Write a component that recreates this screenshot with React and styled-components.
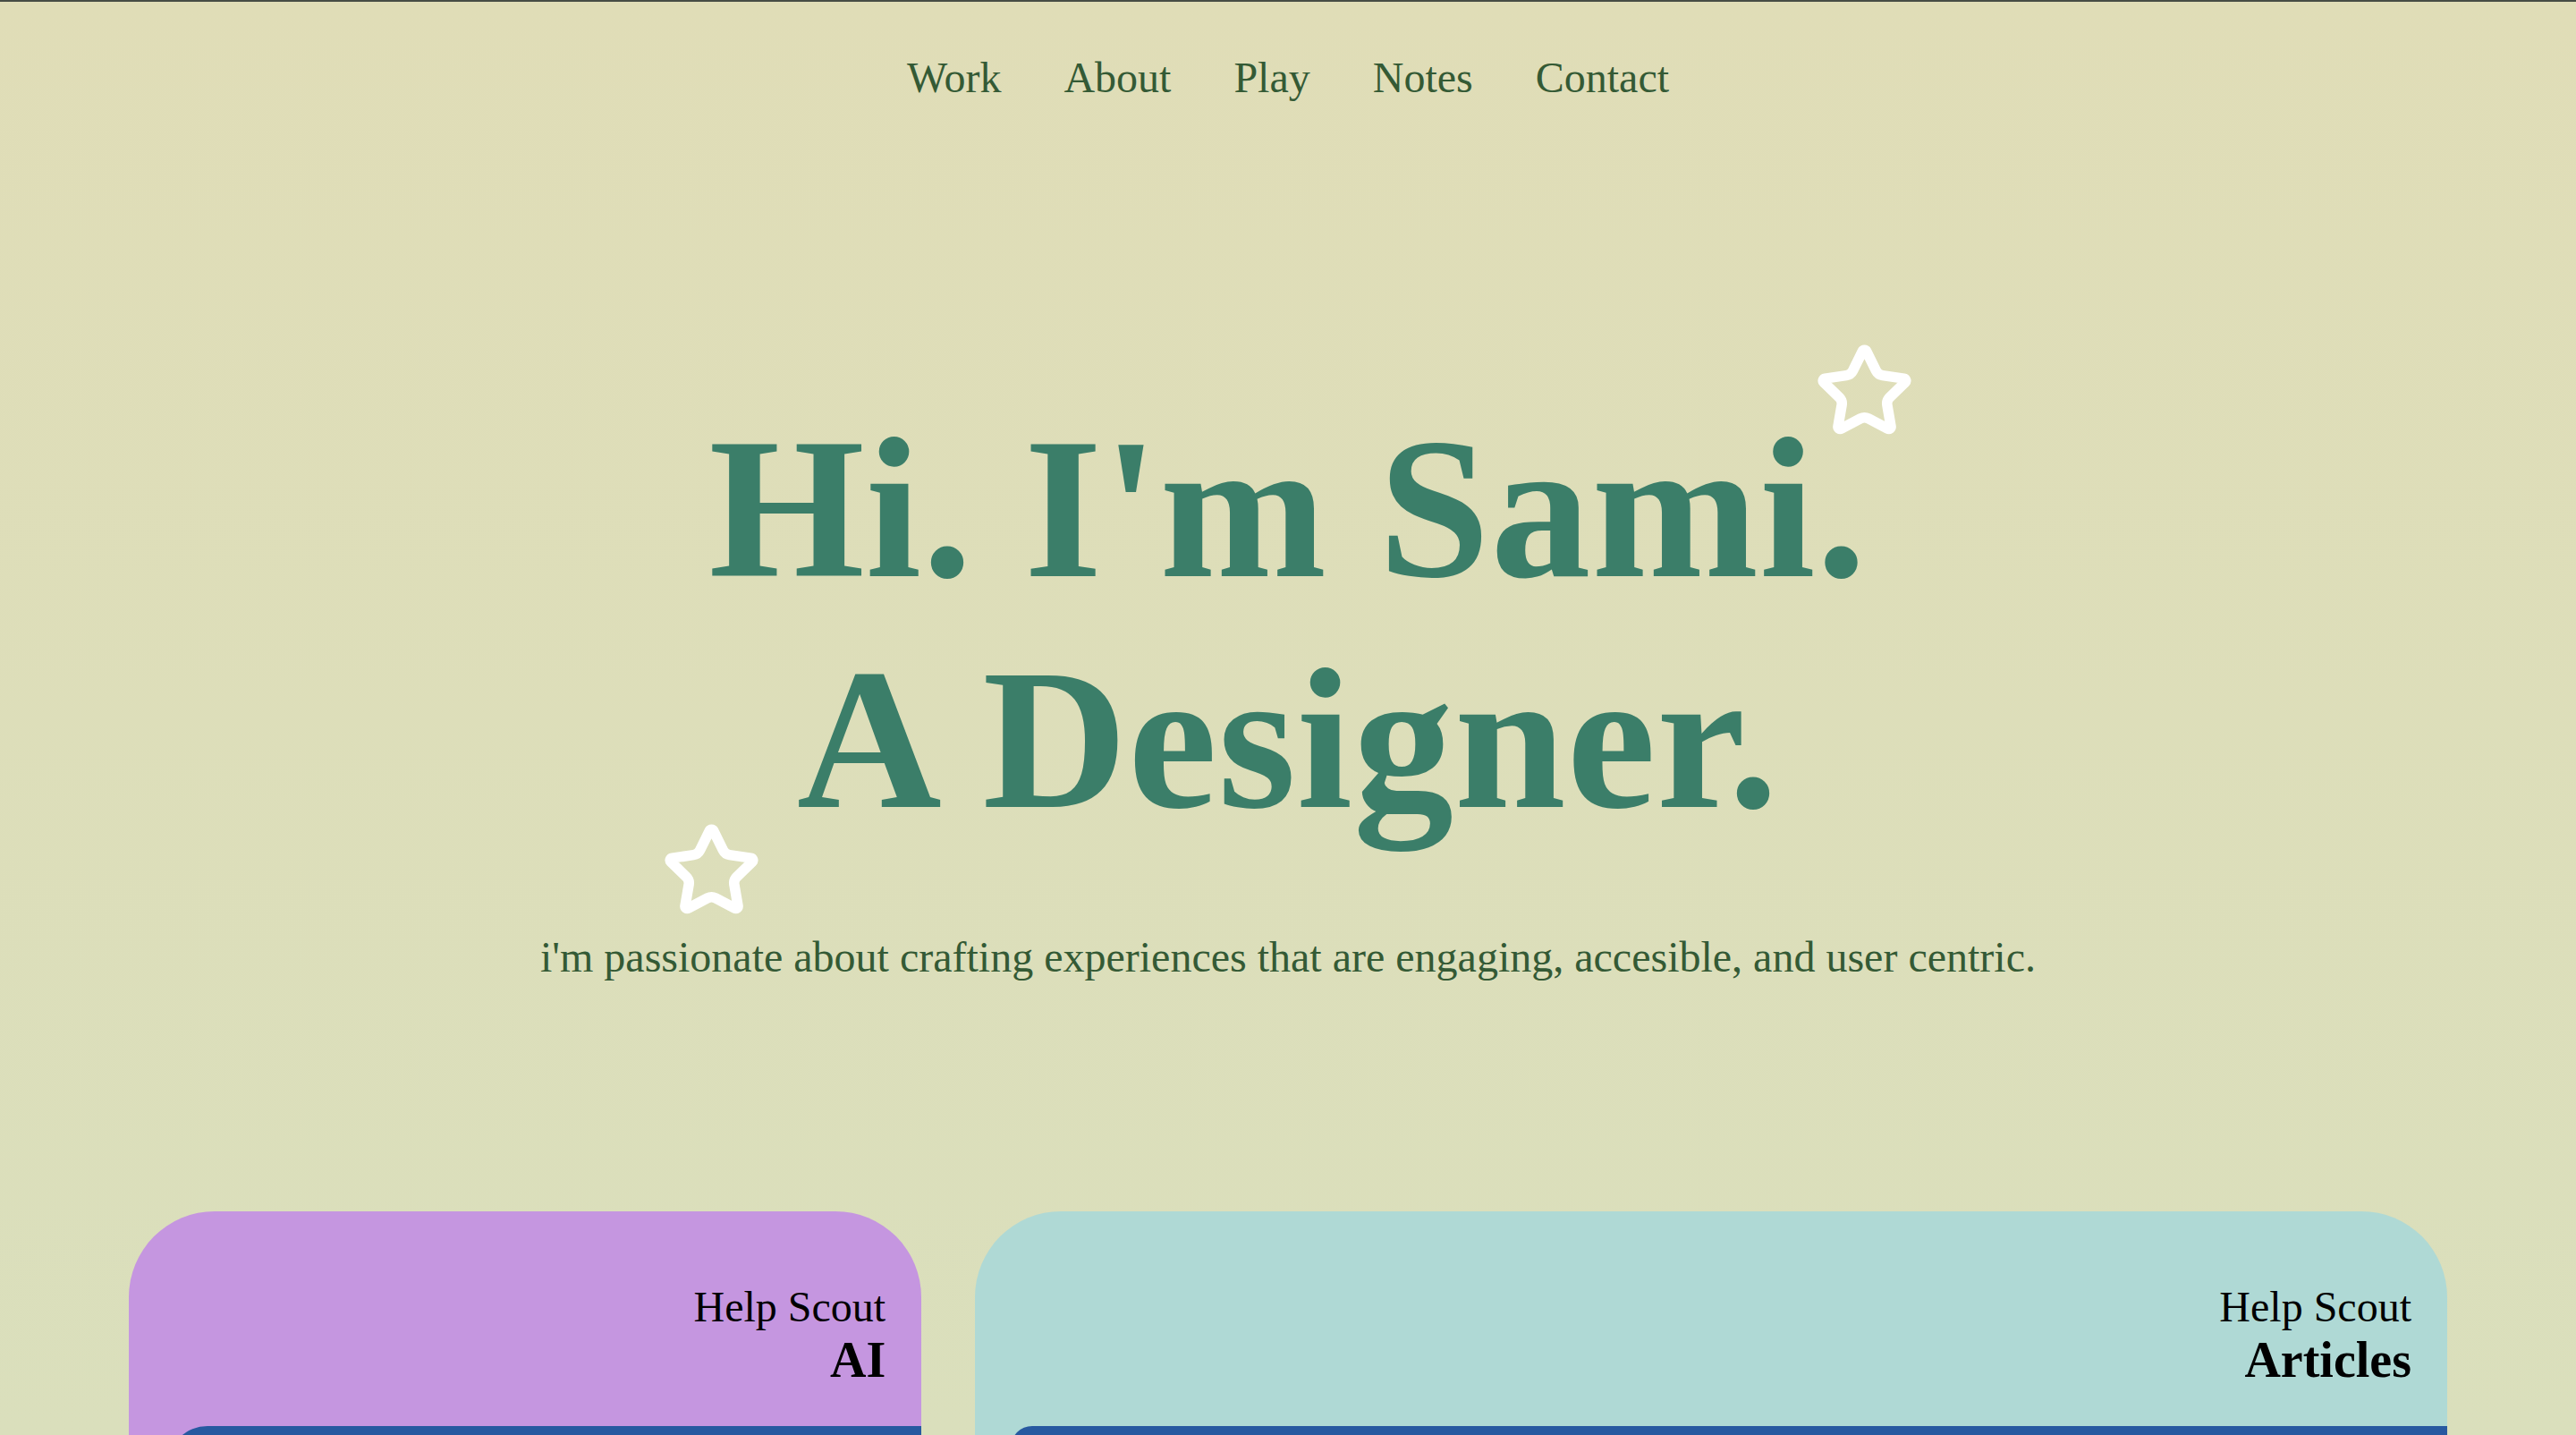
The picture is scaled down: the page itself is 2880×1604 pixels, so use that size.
import React from "react";
import styled, { createGlobalStyle } from "styled-components";
import { Star } from "lucide-react";

const COLORS = {
  bgTop: "#e0ddb7",
  bgBottom: "#dadfbc",
  topLine: "#474c45",
  navText: "#345a35",
  heading: "#3b7e69",
  lilac: "#c596e0",
  mint: "#afd9d5",
  blue: "#2759a0",
};

const GlobalStyle = createGlobalStyle`
  html, body {
    margin: 0;
    padding: 0;
  }
  body {
    min-height: 100vh;
    border-top: 2px solid ${COLORS.topLine};
    background: linear-gradient(180deg, ${COLORS.bgTop} 0%, ${COLORS.bgBottom} 100%);
    background-attachment: fixed;
    font-family: "Liberation Serif", "Times New Roman", serif;
    overflow-x: hidden;
  }
`;

const Page = styled.div`
  min-height: 100vh;
`;

const Nav = styled.nav`
  display: flex;
  justify-content: center;
  gap: 70px;
  padding-top: 57px;
`;

const NavLink = styled.a`
  font-size: 48px;
  line-height: normal;
  color: ${COLORS.navText};
  text-decoration: none;
  cursor: pointer;
`;

const Hero = styled.section`
  position: relative;
  margin-top: 325px;
  text-align: center;
`;

const Title = styled.h1`
  margin: 0;
  font-size: 224px;
  font-weight: 700;
  line-height: normal;
  letter-spacing: 1px;
  color: ${COLORS.heading};
`;

const TitleLine = styled.span`
  display: block;
`;

const Sparkle = styled.div`
  position: absolute;
  top: ${(p) => p.top}px;
  left: calc(50% + ${(p) => p.offset}px);
  color: #fff;
  line-height: 0;
`;

const Lead = styled.p`
  margin: 87px 0 0;
  font-size: 48px;
  line-height: normal;
  color: ${COLORS.navText};
`;

const Projects = styled.section`
  display: grid;
  grid-template-columns: 35fr 65fr;
  gap: 60px;
  padding: 0 144px;
  margin-top: 257px;
`;

const Card = styled.article`
  background: ${(p) => p.bg};
  border-radius: 96px;
  padding-top: 79px;
  height: 760px;
  overflow: hidden;
  display: flex;
  flex-direction: column;
`;

const CardHead = styled.header`
  text-align: right;
  padding-right: 40px;
  color: #000;
`;

const Client = styled.div`
  font-size: 48px;
  line-height: normal;
`;

const Product = styled.div`
  font-size: 56px;
  font-weight: 700;
  line-height: normal;
`;

const Preview = styled.div`
  margin-top: 42px;
  margin-left: ${(p) => p.inset}px;
  flex: 1;
  background: ${COLORS.blue};
  border-top-left-radius: ${(p) => p.radius}px;
`;

const projects = [
  { client: "Help Scout", product: "AI", bg: COLORS.lilac, inset: 44, radius: 44 },
  { client: "Help Scout", product: "Articles", bg: COLORS.mint, inset: 40, radius: 24 },
];

const App = () => {
  return (
    <Page>
      <GlobalStyle />
      <Nav>
        {["Work", "About", "Play", "Notes", "Contact"].map((item) => (
          <NavLink key={item}>{item}</NavLink>
        ))}
      </Nav>

      <Hero>
        <Sparkle top={-57} offset={589}>
          <Star size={111} strokeWidth={2.5} />
        </Sparkle>
        <Title>
          <TitleLine>Hi. I'm Sami.</TitleLine>
          <TitleLine>A Designer.</TitleLine>
        </Title>
        <Sparkle top={479} offset={-700}>
          <Star size={111} strokeWidth={2.5} />
        </Sparkle>
        <Lead>
          i'm passionate about crafting experiences that are engaging, accesible, and user centric.
        </Lead>
      </Hero>

      <Projects>
        {projects.map((project) => (
          <Card key={project.product} bg={project.bg}>
            <CardHead>
              <Client>{project.client}</Client>
              <Product>{project.product}</Product>
            </CardHead>
            <Preview inset={project.inset} radius={project.radius} />
          </Card>
        ))}
      </Projects>
    </Page>
  );
};

export default App;
